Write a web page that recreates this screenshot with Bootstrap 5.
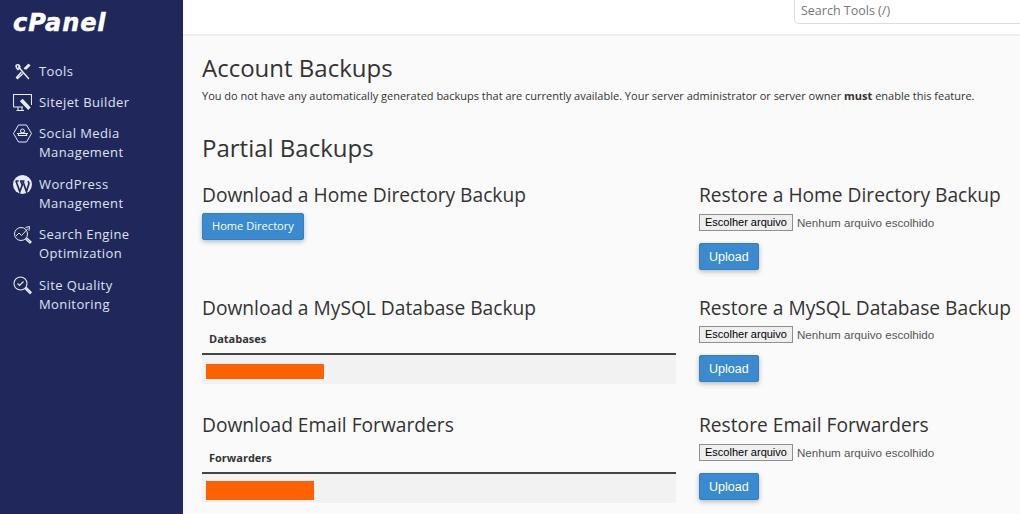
<!DOCTYPE html>
<html lang="en">
<head>
  <meta charset="UTF-8" />
  <title>Backup - cPanel</title>
  <link href="https://cdn.jsdelivr.net/npm/bootstrap@5.3.0/dist/css/bootstrap.min.css" rel="stylesheet"/>
  <style>
    html, body { height: 514px; overflow: hidden; }
    body { font-family: "Open Sans", sans-serif; background: #fafafa; color: #333; }

    .side-bar { width: 183px; height: 514px; background: #20275a; color: #dfe3f2; flex-shrink: 0; }
    .side-logo { height: 45px; padding: 3px 0 0 13px; color: #fff; font: italic 700 24px/40px "DejaVu Sans", sans-serif; letter-spacing: .9px; -webkit-text-stroke: .5px #fff; }
    .side-menu { padding: 17px 0 0 13px; }
    .side-item { display: flex; gap: 7px; font-size: 13px; line-height: 19px; letter-spacing: .4px; margin-bottom: 12.500px; color: #dfe3f2; text-decoration: none; }
    .side-item:first-child { margin-bottom: 11.500px; }
    .side-item svg { width: 19px; height: 19px; flex-shrink: 0; }

    .top-bar { height: 36px; background: #fff; border-bottom: 2px solid #eee; overflow: hidden; }
    .search-box { width: 240px; height: 24px; margin-left: 611px; flex-shrink: 0; border: 1px solid #ddd; border-top: 0; border-radius: 0 0 0 5px; padding: 2px 6px; font-size: 12.500px; line-height: 18px; color: #777; }

    .page-body { padding: 0 0 0 19px; }
    .page-title { font-size: 24px; line-height: 32px; font-weight: 400; margin: 0; color: #333; }
    .intro-text { font-size: 11px; line-height: 16px; margin: 4px 0 0; white-space: nowrap; }
    .partial-title { margin-top: 28px; margin-bottom: 18px; }

    .backup-row { display: flex; gap: 23px; }
    .col-left { width: 474px; flex-shrink: 0; }
    .col-right { flex: 1; white-space: nowrap; }
    .sect-title { font-size: 19.200px; line-height: 26px; font-weight: 400; margin: 0 0 5px; color: #333; white-space: nowrap; }
    .col-right .sect-title { margin-bottom: 6px; }

    .btn-cp { background: #3a8acf; border: 1px solid #337fc0; color: #fff; border-radius: 2px; font-size: 11.100px; line-height: 16px; padding: 4px 9px 6px; box-shadow: 0 2px 5px rgba(0,0,0,.25); }
    .btn-cp:hover { background: #337fc0; color: #fff; }
    .btn-home { height: 27px; }
    .btn-upload { display: block; height: 27px; font-family: "Liberation Sans", sans-serif; font-size: 12.500px; padding: 4px 9px; margin-top: 12px; }

    .file-pick { display: flex; align-items: center; height: 17px; font-family: "Liberation Sans", sans-serif; font-size: 11.600px; color: #555; }
    .file-tight { margin-top: -1px; }
    .file-btn { background: #efefef; border: 1px solid #8f8f8f; border-radius: 0; color: #000; font-size: 11px; line-height: 15px; padding: 0 5px; height: 17px; margin-right: 4px; }

    .data-head { font-size: 11px; font-weight: 700; line-height: 16px; padding: 5px 7px 6px; border-bottom: 2px solid #444; margin: 0; }
    .head-low { padding-top: 7px; }
    .data-cell { height: 29px; background: #f2f2f2; padding: 9px 4px 0; }
    .redact { height: 15px; background: #ff6100; }
    .w-db { width: 118px; }
    .w-fw { width: 108px; height: 19px; margin-top: -2px; }
    .gap-one { margin-bottom: 25px; }
    .gap-two { margin-bottom: 28px; }
  </style>
</head>
<body>
<div class="d-flex">

  <!-- Sidebar -->
  <nav class="side-bar">
    <div class="side-logo">cPanel</div>
    <div class="side-menu">
      <a class="side-item" href="#">
        <svg viewBox="0 0 19 19" fill="none" stroke="#e8ebf6" stroke-width="1.500" stroke-linecap="round"><path d="M5.500 5l10 11.500M15.500 2.500L11.500 6.500M15.500 2.500l1 1-3.500 3.500M8 10.500L3.500 15.500M3.500 15.500l1 1L9.500 12M3 3.500c1-1 2.500-1 3.300 0s.8 2 .2 2.800L5 7.500 3.500 6z"/></svg>
        <span>Tools</span>
      </a>
      <a class="side-item" href="#">
        <svg viewBox="0 0 19 19" fill="none" stroke="#e8ebf6" stroke-width="1.100"><path d="M.5 14V1.500h18V12M.5 14H10M5 14v3M9 14v3M3.500 17.500H11"/><path d="M9.500 6.500l7.500 8-1.800 1.800-7.500-8z" fill="#e8ebf6"/></svg>
        <span>Sitejet Builder</span>
      </a>
      <a class="side-item" href="#">
        <svg viewBox="0 0 19 19" fill="none" stroke="#e8ebf6" stroke-width="1"><path d="M5.500 1h8l5 8.500-5 8.500h-8l-5-8.500z"/><circle cx="9.500" cy="7" r="2"/><path d="M5 11.500c1-2.500 2-2.500 4.500-2.500s3.500 0 4.500 2.500zM4 9.500h11"/></svg>
        <span>Social Media<br>Management</span>
      </a>
      <a class="side-item" href="#">
        <svg viewBox="0 0 19 19"><circle cx="9.500" cy="9.500" r="9.500" fill="#e8ebf6"/><path d="M3 6l3.800 10.500 2.400-6.500-1.500-4M2.500 6h3.200M7 6h4.500M9.800 6l3.600 10.500 2.300-7c.4-1.200 0-2.300-.8-3.200" fill="none" stroke="#20275a" stroke-width="1.700"/></svg>
        <span>WordPress<br>Management</span>
      </a>
      <a class="side-item" href="#">
        <svg viewBox="0 0 19 19" fill="none" stroke="#e8ebf6" stroke-width="1"><circle cx="8" cy="9" r="6.500"/><path d="M3 11l3-3 2.500 2.500L15 3.500M12.500 2.500l4-1-.5 4"/><path d="M12.500 14l4.500 4 1-1.200-4.500-4" stroke-width="1.300"/></svg>
        <span>Search Engine<br>Optimization</span>
      </a>
      <a class="side-item" href="#">
        <svg viewBox="0 0 19 19" fill="none" stroke="#e8ebf6" stroke-width="1.100"><circle cx="7.500" cy="7.500" r="6.500"/><path d="M4.500 7.500l2 2 4-4"/><path d="M12 12.500l5 5 1-1.200-5-5" stroke-width="1.500"/></svg>
        <span>Site Quality<br>Monitoring</span>
      </a>
    </div>
  </nav>

  <!-- Main -->
  <div class="flex-grow-1">
    <div class="top-bar d-flex">
      <div class="search-box">Search Tools (/)</div>
    </div>

    <main class="page-body">
      <h1 class="page-title mt-3">Account Backups</h1>
      <p class="intro-text">You do not have any automatically generated backups that are currently available. Your server administrator or server owner <b>must</b> enable this feature.</p>

      <h1 class="page-title partial-title">Partial Backups</h1>

      <div class="backup-row gap-one">
        <div class="col-left">
          <h2 class="sect-title">Download a Home Directory Backup</h2>
          <button class="btn btn-cp btn-home" type="button">Home Directory</button>
        </div>
        <div class="col-right">
          <h2 class="sect-title">Restore a Home Directory Backup</h2>
          <div class="file-pick"><button class="file-btn" type="button">Escolher arquivo</button>Nenhum arquivo escolhido</div>
          <button class="btn btn-cp btn-upload" type="button">Upload</button>
        </div>
      </div>

      <div class="backup-row gap-two">
        <div class="col-left">
          <h2 class="sect-title">Download a MySQL Database Backup</h2>
          <p class="data-head">Databases</p>
          <div class="data-cell"><div class="redact w-db"></div></div>
        </div>
        <div class="col-right">
          <h2 class="sect-title">Restore a MySQL Database Backup</h2>
          <div class="file-pick file-tight"><button class="file-btn" type="button">Escolher arquivo</button>Nenhum arquivo escolhido</div>
          <button class="btn btn-cp btn-upload" type="button">Upload</button>
        </div>
      </div>

      <div class="backup-row">
        <div class="col-left">
          <h2 class="sect-title">Download Email Forwarders</h2>
          <p class="data-head head-low">Forwarders</p>
          <div class="data-cell"><div class="redact w-fw"></div></div>
        </div>
        <div class="col-right">
          <h2 class="sect-title">Restore Email Forwarders</h2>
          <div class="file-pick"><button class="file-btn" type="button">Escolher arquivo</button>Nenhum arquivo escolhido</div>
          <button class="btn btn-cp btn-upload" type="button">Upload</button>
        </div>
      </div>
    </main>
  </div>
</div>
<script src="https://cdn.jsdelivr.net/npm/bootstrap@5.3.0/dist/js/bootstrap.bundle.min.js"></script>
</body>
</html>
